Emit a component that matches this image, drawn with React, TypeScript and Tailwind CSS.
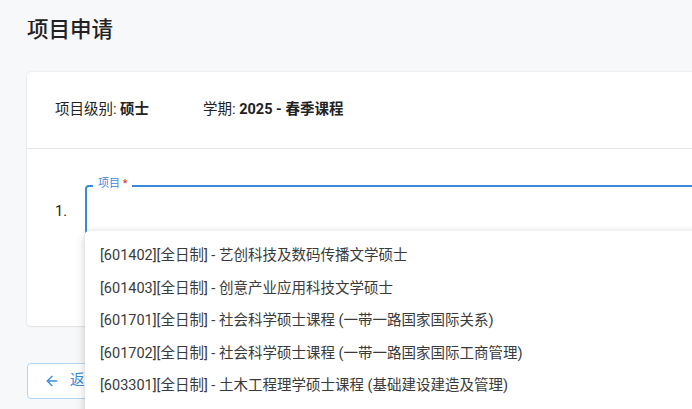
import { ArrowLeft } from "lucide-react";

const programs = [
  "[601402][全日制] - 艺创科技及数码传播文学硕士",
  "[601403][全日制] - 创意产业应用科技文学硕士",
  "[601701][全日制] - 社会科学硕士课程 (一带一路国家国际关系)",
  "[601702][全日制] - 社会科学硕士课程 (一带一路国家国际工商管理)",
  "[603301][全日制] - 土木工程理学硕士课程 (基础建设建造及管理)",
];

export default function App() {
  return (
    <div
      className="w-[692px] h-[409px] overflow-hidden bg-[#f7f8fa] text-[#212121]"
      style={{ fontFamily: 'Roboto, "Noto Sans CJK SC", sans-serif' }}
    >
      <div className="pl-[27px] pt-[16px] w-[1000px]">
        <h1 className="text-[21.5px] leading-[28px] font-medium text-[#222]">项目申请</h1>

        {/* Info card */}
        <div className="mt-[28px] w-[900px] bg-white rounded-[4px] shadow-[0_0_2px_rgba(0,0,0,0.12),0_1px_2px_rgba(0,0,0,0.06)]">
          <div className="h-[77px] px-[28px] flex items-center gap-[54px] text-[14.5px] text-[#222] border-b border-[#e6e6e6]">
            <div>
              项目级别: <span className="font-bold">硕士</span>
            </div>
            <div>
              学期: <span className="font-bold">2025 - 春季课程</span>
            </div>
          </div>

          <div className="h-[177px] px-[28px] pt-[36px] flex items-start">
            <div className="w-[30px] pt-[16px] text-[14.5px] text-[#222]">1.</div>
            <div className="relative flex-1">
              <div className="h-[50px] border-2 border-[#3b8ad9] rounded-[4px]" />
              <div className="absolute left-[8px] top-[-8px] bg-white px-[5px] text-[11px] leading-[14px] text-[#3b8ad9]">
                项目 <span className="text-[#d32f2f]">*</span>
              </div>

              {/* Dropdown */}
              <div className="absolute left-0 top-[46px] w-[800px] h-[200px] z-10 bg-white rounded-[4px] pt-[9px] shadow-[0_4px_12px_rgba(0,0,0,0.14),0_0_6px_rgba(0,0,0,0.08)]">
                {programs.map((p) => (
                  <div
                    key={p}
                    className="h-[32.5px] px-[15px] flex items-center text-[14.5px] text-[#3a3a3a] whitespace-nowrap"
                  >
                    {p}
                  </div>
                ))}
              </div>
            </div>
          </div>
        </div>

        <button className="mt-[37px] h-[36px] px-[16px] flex items-center gap-[10px] rounded-[4px] border border-[#b5d4f1] bg-white text-[#3b8ad9] text-[14.5px]">
          <ArrowLeft size={16} strokeWidth={2} />
          返回
        </button>
      </div>
    </div>
  );
}
